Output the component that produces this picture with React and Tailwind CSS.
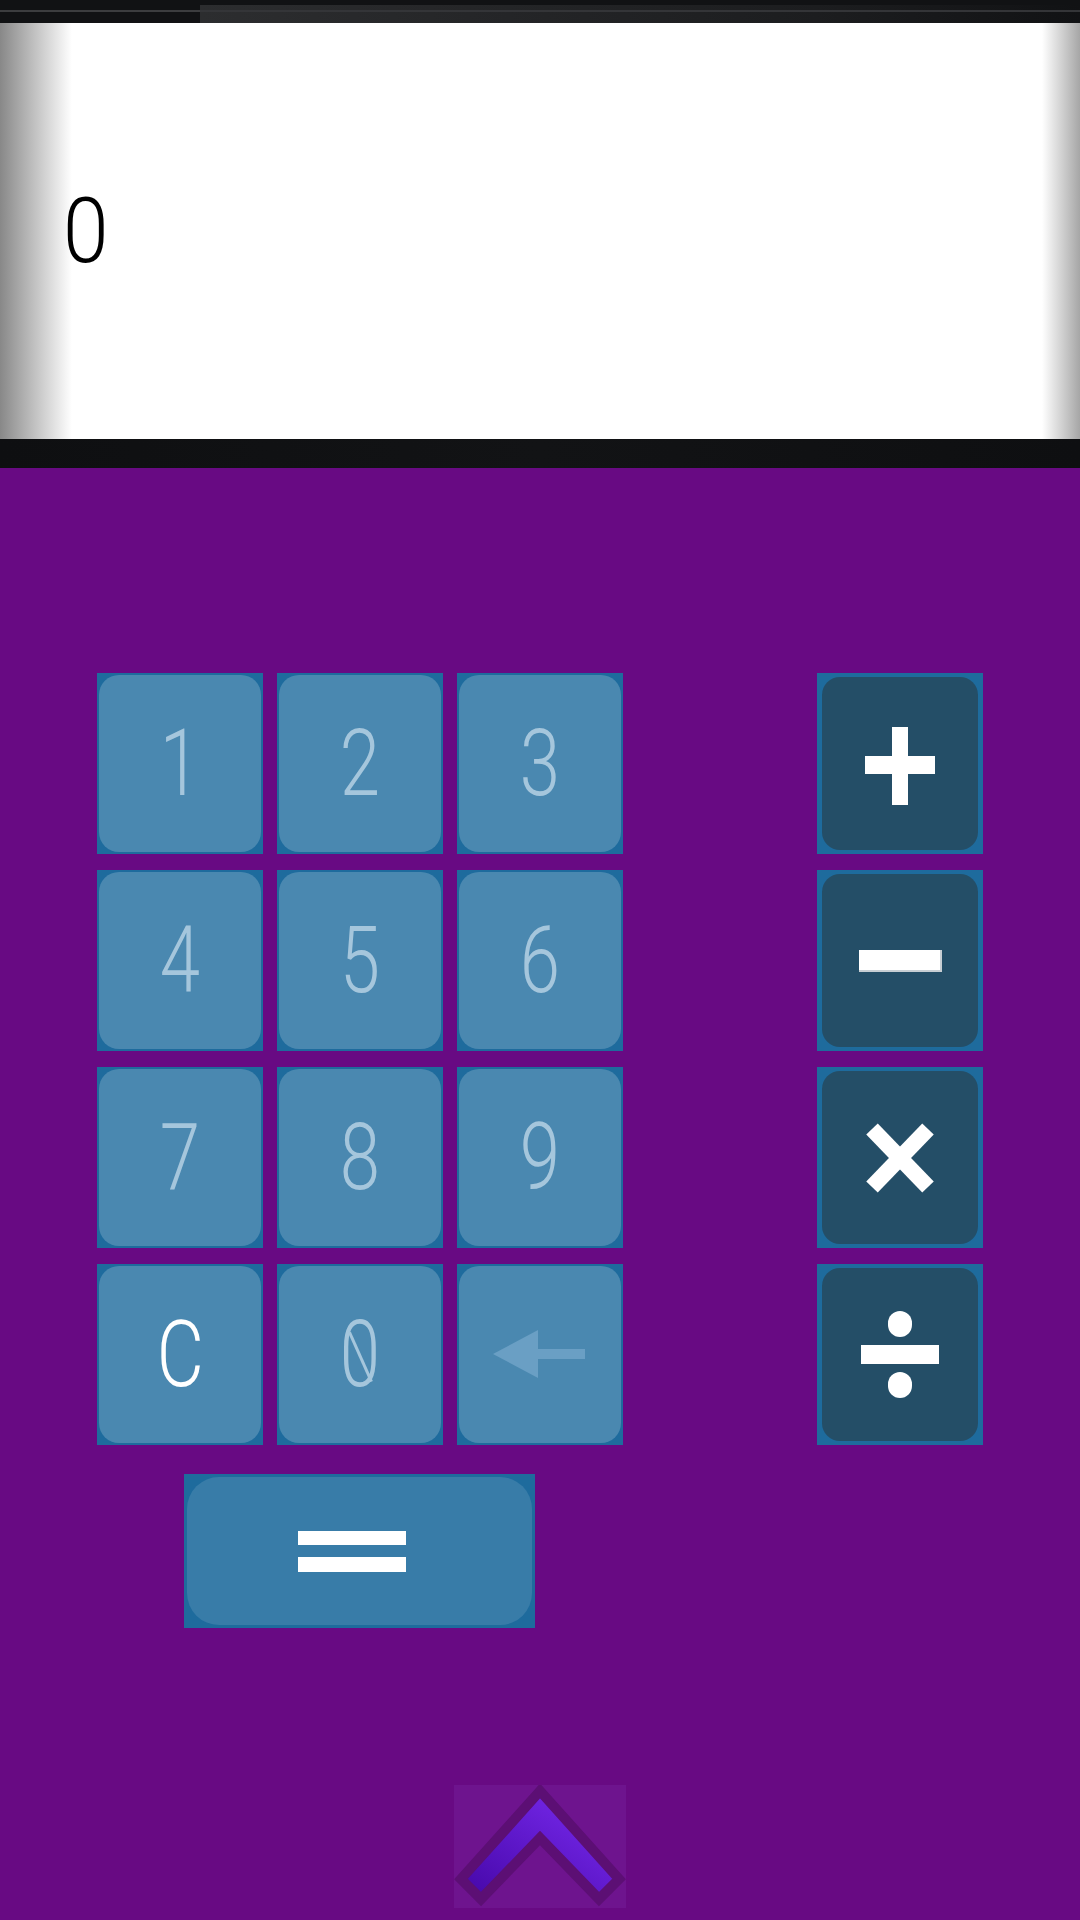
import React from 'react';

const digitFont = { fontFamily: 'Roboto, "Open Sans", sans-serif' };

function KeyButton({ children }) {
    return (
        <div className="w-[166px] h-[181px] bg-[#1e6b9d] p-[2px]">
            <div className="relative w-full h-full rounded-[20px] bg-[#4a88b0] flex items-center justify-center">
                {children}
            </div>
        </div>
    );
}

function OpButton({ children }) {
    return (
        <div className="w-[166px] h-[181px] bg-[#1e6b9d] px-[5px] py-[4px]">
            <div className="w-full h-full rounded-[18px] bg-[#244e67] flex items-center justify-center">
                {children}
            </div>
        </div>
    );
}

function Digit({ value, white }) {
    return (
        <span
            className={`text-[93px] leading-none font-light scale-x-[0.78] ${white ? 'text-white' : 'text-[#a5c6dc]'}`}
            style={digitFont}
        >
            {value}
        </span>
    );
}

export default function App() {
    const digits = ['1', '2', '3', '4', '5', '6', '7', '8', '9'];

    return (
        <div className="w-[1080px] h-[1920px] flex flex-col bg-[#680a83] overflow-hidden">
            {/* status bar */}
            <div className="h-[23px] flex bg-[#111214]">
                <div className="w-[200px] pt-[10px]">
                    <div className="h-[2px] bg-[#3c3d3f]" />
                </div>
                <div className="flex-1 mt-[5px] bg-[linear-gradient(to_right,#2c2d2f,#1c1d1f_70%,#111214)]">
                    <div className="mt-[5px] h-[2px] bg-[#343538]" />
                </div>
            </div>

            {/* display */}
            <div className="h-[416px] flex items-center pl-[63px] bg-[linear-gradient(to_right,#888888_0px,#ffffff_72px,#ffffff_1042px,#a6a6a6_1080px)]">
                <span className="text-[91px] leading-none font-light text-black scale-x-[0.9] origin-left" style={digitFont}>0</span>
            </div>
            <div className="h-[29px] bg-[linear-gradient(to_right,#0e0f11,#121315_50%,#0e0f11)]" />

            {/* keypad */}
            <div className="flex-1 flex flex-col pt-[205px]">
                <div className="flex pl-[97px]">
                    <div className="grid grid-cols-[166px_166px_166px] gap-x-[14px] gap-y-[16px]">
                        {digits.map((d) => (
                            <KeyButton key={d}>
                                <Digit value={d} />
                            </KeyButton>
                        ))}
                        <KeyButton>
                            <Digit value="C" white />
                        </KeyButton>
                        <KeyButton>
                            <Digit value="0" />
                            <div className="absolute left-[80px] top-[64px] w-[3px] h-[54px] bg-[#a5c6dc] -rotate-[24deg]" />
                        </KeyButton>
                        <KeyButton>
                            <svg width="94" height="50" viewBox="0 0 94 50">
                                <polygon points="0,24 45,0 45,48" fill="#6a9fc4" />
                                <rect x="44" y="19" width="48" height="10" fill="#6a9fc4" />
                            </svg>
                        </KeyButton>
                    </div>

                    <div className="ml-[194px] flex flex-col gap-[16px]">
                        <OpButton>
                            <svg width="70" height="78" viewBox="0 0 70 78" className="mt-[4px]">
                                <rect x="27" y="0" width="16" height="78" fill="#fff" />
                                <rect x="0" y="29" width="70" height="18" fill="#fff" />
                            </svg>
                        </OpButton>
                        <OpButton>
                            <div className="w-[83px] h-[22px] bg-white border-r-2 border-b-2 border-[#c7ced3]" />
                        </OpButton>
                        <OpButton>
                            <svg width="74" height="76" viewBox="0 0 74 76">
                                <line x1="9" y1="9" x2="65" y2="67" stroke="#fff" strokeWidth="16" />
                                <line x1="65" y1="9" x2="9" y2="67" stroke="#fff" strokeWidth="16" />
                            </svg>
                        </OpButton>
                        <OpButton>
                            <div className="flex flex-col items-center gap-[8px]">
                                <div className="w-[24px] h-[26px] rounded-full bg-white" />
                                <div className="w-[78px] h-[19px] bg-white" />
                                <div className="w-[24px] h-[26px] rounded-full bg-white" />
                            </div>
                        </OpButton>
                    </div>
                </div>

                {/* equals */}
                <div className="mt-[29px] ml-[184px] w-[351px] h-[154px] bg-[#1e6b9d] p-[3px]">
                    <div className="w-full h-full rounded-[32px] bg-[#387ca8] flex flex-col items-center justify-center gap-[12px] pr-[15px]">
                        <div className="w-[108px] h-[14px] bg-white" />
                        <div className="w-[108px] h-[15px] bg-white" />
                    </div>
                </div>

                {/* chevron */}
                <div className="mt-[157px] mx-auto w-[172px] h-[123px] bg-[#6e148e]">
                    <svg width="172" height="123" viewBox="0 0 172 123">
                        <defs>
                            <linearGradient id="chev" x1="0" y1="1" x2="1" y2="0">
                                <stop offset="0" stopColor="#4406a6" />
                                <stop offset="1" stopColor="#7e2ef6" />
                            </linearGradient>
                        </defs>
                        <polygon
                            points="86,6 7,94 27,114 86,53 145,114 165,94"
                            fill="url(#chev)"
                            stroke="#5c0f74"
                            strokeWidth="10"
                            strokeLinejoin="miter"
                        />
                    </svg>
                </div>
            </div>
        </div>
    );
}
